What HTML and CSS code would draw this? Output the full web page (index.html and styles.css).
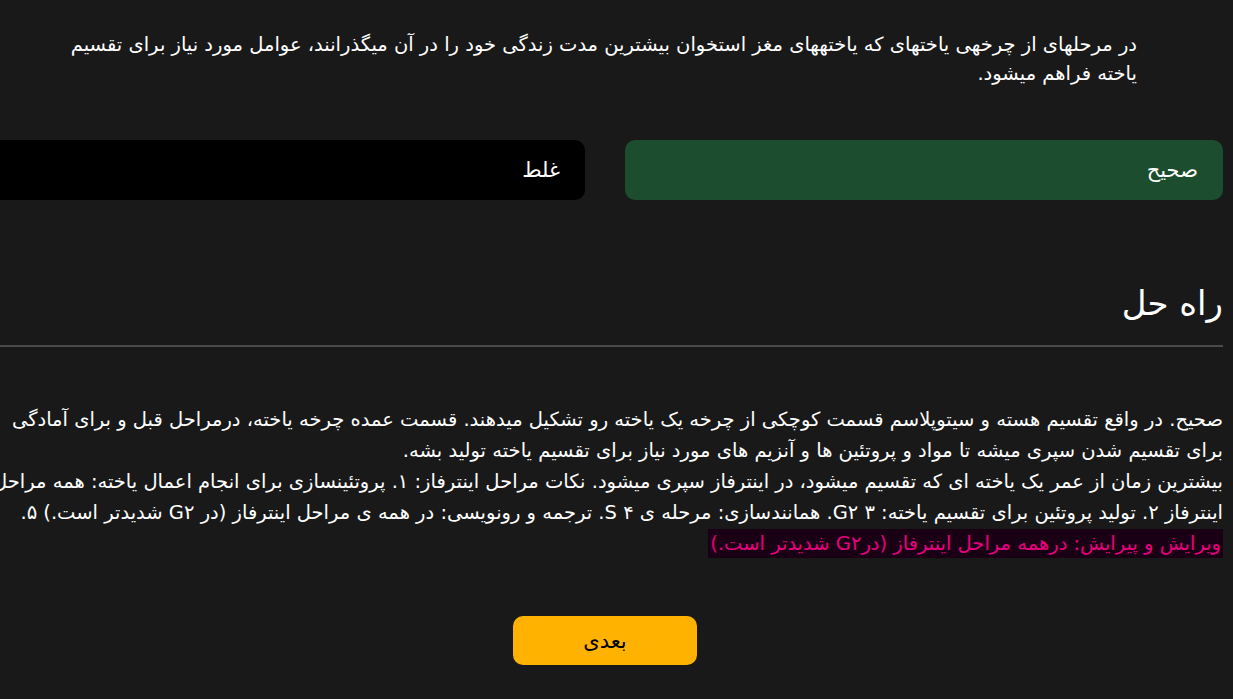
FILE: index.html
```html
<!DOCTYPE html>
<html lang="fa" dir="rtl">
<head>
<meta charset="utf-8">
<title>سوال</title>
<link rel="stylesheet" href="styles.css">
</head>
<body>
<main class="page">
  <p class="question">در مرحلهای از چرخهی یاختهای که یاختههای مغز استخوان بیشترین مدت زندگی خود را در آن میگذرانند، عوامل مورد نیاز برای تقسیم<br>یاخته فراهم میشود.</p>

  <div class="options">
    <div class="option option-correct">صحیح</div>
    <div class="option option-wrong">غلط</div>
  </div>

  <h2 class="solution-title">راه حل</h2>
  <hr class="divider">

  <p class="solution">صحیح. در واقع تقسیم هسته و سیتوپلاسم قسمت کوچکی از چرخه یک یاخته رو تشکیل میدهند. قسمت عمده چرخه یاخته، درمراحل قبل و برای آمادگی<br>برای تقسیم شدن سپری میشه تا مواد و پروتئین ها و آنزیم های مورد نیاز برای تقسیم یاخته تولید بشه.<br>بیشترین زمان از عمر یک یاخته ای که تقسیم میشود، در اینترفاز سپری میشود. نکات مراحل اینترفاز: ۱. پروتئینسازی برای انجام اعمال یاخته: همه مراحل<br>اینترفاز ۲. تولید پروتئین برای تقسیم یاخته: G۲ ۳. همانندسازی: مرحله ی S ۴. ترجمه و رونویسی: در همه ی مراحل اینترفاز (در G۲ شدیدتر است.) ۵.<br><span class="highlight">ویرایش و پیرایش: درهمه مراحل اینترفاز (درG۲ شدیدتر است.)</span></p>

  <div class="actions">
    <button class="next-button" type="button">بعدی</button>
  </div>
</main>
</body>
</html>
```
FILE: styles.css
```css
html, body {
  margin: 0;
  padding: 0;
  background: #191919;
  overflow: hidden;
}

body {
  color: #ffffff;
  font-family: "DejaVu Sans", "Noto Sans", sans-serif;
}

.page {
  width: 1236px;
  margin-right: 10px;
  display: flex;
  flex-direction: column;
}

.question {
  margin: 30px 0 0;
  padding: 0 86px;
  font-size: 19.5px;
  line-height: 29px;
  white-space: nowrap;
}

.options {
  display: flex;
  gap: 40px;
  margin-top: 52px;
}

.option {
  flex: 1;
  height: 60px;
  border-radius: 10px;
  display: flex;
  align-items: center;
  padding: 0 25px;
  font-size: 21px;
  box-sizing: border-box;
}

.option-correct {
  background: #1b4d2e;
}

.option-wrong {
  background: #000000;
}

.solution-title {
  margin: 83px 0 0;
  font-size: 34px;
  font-weight: normal;
  line-height: 40px;
}

.divider {
  margin: 22px 0 0;
  border: 0;
  height: 2px;
  background: #4a4a4a;
}

.solution {
  margin: 57px 0 0;
  font-size: 19.5px;
  line-height: 31px;
  white-space: nowrap;
}

.highlight {
  background: #1a0015;
  color: #e8007f;
  padding: 3px 2px;
}

.actions {
  display: flex;
  justify-content: center;
  margin-top: 57px;
}

.next-button {
  width: 184px;
  height: 49px;
  border: 0;
  border-radius: 10px;
  background: #ffb300;
  color: #000000;
  font-family: "DejaVu Sans", "Noto Sans", sans-serif;
  font-size: 21px;
}
```
